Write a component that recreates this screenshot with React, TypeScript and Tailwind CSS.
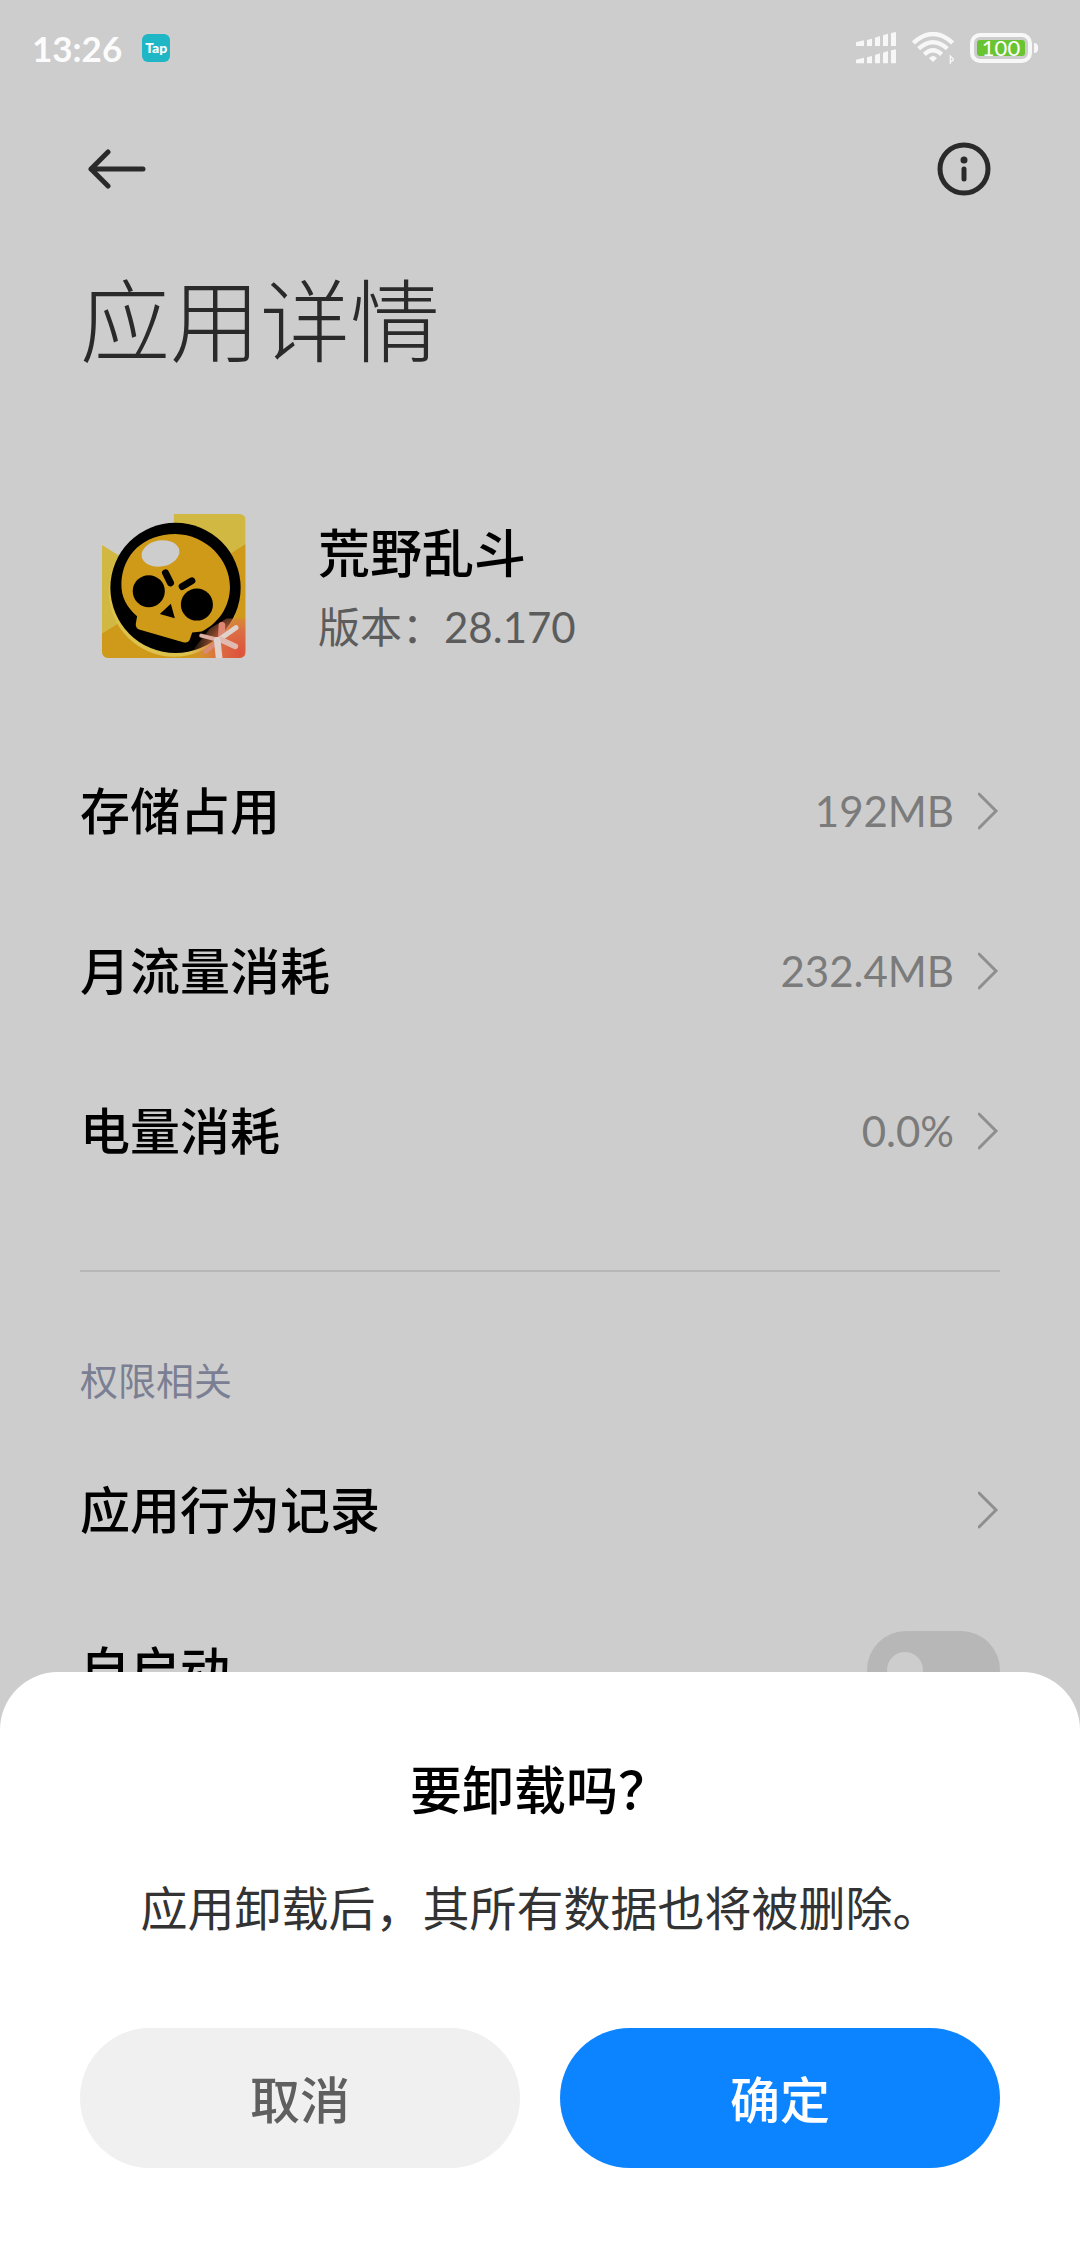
import type { ReactNode } from "react";

const usage = [
  { label: "存储占用", value: "192MB" },
  { label: "月流量消耗", value: "232.4MB" },
  { label: "电量消耗", value: "0.0%" },
];

function StatusBar() {
  return (
    <div className="flex h-24 items-center justify-between pl-8 pr-[42px]">
      <div className="flex items-center gap-5">
        <span className="text-[35px] leading-10 font-bold text-[#fcfcfc]">13:26</span>
        <span className="flex size-7 items-center justify-center rounded-md bg-[#1fb6c6] text-[14px] leading-4 font-black text-white">
          Tap
        </span>
      </div>
      <div className="flex items-center gap-4">
        <SignalIcon />
        <WifiIcon />
        <Battery />
      </div>
    </div>
  );
}

function SignalIcon() {
  return (
    <svg className="h-8 w-10" viewBox="0 0 120 96" fill="#f7f7f7" aria-hidden="true">
      <path d="M0 31L24 25V42H0zM33 24L48 20V42H33zM57 17L72 12V42H57zM81 10L96 5V42H81zM105 3L120 0V42H105z" />
      <path d="M0 83L24 77V94H0zM33 76L48 72V94H33zM57 69L72 64V94H57zM81 62L96 57V94H81zM105 55L120 52V94H105z" />
    </svg>
  );
}

function WifiIcon() {
  return (
    <svg className="h-8 w-[42px]" viewBox="0 0 126 96" fill="none" stroke="#f7f7f7" strokeWidth="13" aria-hidden="true">
      <path d="M4 33Q63 -21 122 33" />
      <path d="M20 50Q63 11 106 50" />
      <path d="M37 67Q63 43 89 67" />
      <path d="M63 90L51 79Q63 65 75 79z" fill="#f7f7f7" stroke="none" />
      <path d="M115 70V97L115 72L126 83L115 90" strokeWidth="4" />
    </svg>
  );
}

function Battery() {
  return (
    <div className="flex items-center gap-[2px]">
      <span className="flex h-[30px] w-[62px] rounded-[10px] border-4 border-[#f7f7f7] p-[3px]">
        <span className="flex flex-1 items-center justify-center rounded-[3px] bg-[#68c531] text-[22px] leading-4 text-white">
          100
        </span>
      </span>
      <span className="h-[10px] w-1 rounded-r-sm bg-[#f7f7f7]" />
    </div>
  );
}

function AppIcon() {
  return (
    <svg className="size-36" viewBox="67 72 431 431" role="img" aria-label="荒野乱斗">
      <defs>
        <clipPath id="tile">
          <path d="M282 72H477Q497 72 497 92V483Q497 503 477 503H87Q67 503 67 483V165L115 195L282 120z" />
        </clipPath>
        <radialGradient id="glow" gradientUnits="userSpaceOnUse" cx="480" cy="490" r="150">
          <stop offset="0" stopColor="#dd523c" />
          <stop offset="0.45" stopColor="#dd6848" stopOpacity="0.9" />
          <stop offset="1" stopColor="#dd8a50" stopOpacity="0" />
        </radialGradient>
      </defs>
      <g clipPath="url(#tile)">
        <path d="M67 72H497V503H67z" fill="#d0b843" />
        <path d="M497 162L287 295L497 430z" fill="#cf9a1a" />
        <path d="M67 430L287 295V503H67z" fill="#cf9a1a" />
        <path d="M287 295L497 430V503H287z" fill="#cf9a1a" />
        <circle cx="283" cy="303" r="196" fill="#dcc24c" />
      </g>
      <circle cx="287" cy="293" r="195" fill="#000" />
      <path
        d="M287 132C380 134 450 210 450 290C450 350 415 400 365 424L337 427L330 447Q325 460 310 456L178 418Q168 414 168 402L172 378C140 350 124 320 125 280C128 195 190 132 287 132z"
        fill="#cf9a18"
      />
      <ellipse cx="242" cy="190" rx="57" ry="39" transform="rotate(-10 242 190)" fill="#cdcdcd" />
      <circle cx="207" cy="303" r="48" />
      <circle cx="351" cy="343" r="48" />
      <path d="M257 248L272 278M307 289L336 272" stroke="#000" strokeWidth="21" strokeLinecap="round" />
      <path d="M273 341L240 371L285 384z" />
      <g clipPath="url(#tile)">
        <path d="M320 503L390 415L440 385H497V503z" fill="url(#glow)" />
        <g strokeLinecap="round">
          <path d="M376 484L412 456" stroke="#d98a78" strokeWidth="12" />
          <path d="M426 405L424 445" stroke="#de8773" strokeWidth="20" />
          <path d="M364 436L420 450" stroke="#dfaea2" strokeWidth="12" />
          <path d="M468 412L420 446" stroke="#dfd2cd" strokeWidth="15" />
          <path d="M466 468L422 448" stroke="#e0bab0" strokeWidth="17" />
          <path d="M412 450L418 508" stroke="#dfd2cd" strokeWidth="20" />
        </g>
      </g>
    </svg>
  );
}

function Chevron() {
  return (
    <svg className="h-10 w-[22px]" viewBox="0 0 22 40" fill="none" stroke="#8f8f8f" strokeWidth="3" strokeLinecap="round" aria-hidden="true">
      <path d="M1 3L18 20L1 37" />
    </svg>
  );
}

function LinkRow({ label, value }: { label: string; value?: string }) {
  return (
    <a href="#" className="flex h-40 items-center justify-between">
      <span className="text-[50px] leading-[60px] font-medium text-black">{label}</span>
      <span className="flex items-center gap-6 text-[42px] leading-[60px] text-[#7b7b7b]">
        {value}
        <Chevron />
      </span>
    </a>
  );
}

function SheetButton({ className, children }: { className: string; children: ReactNode }) {
  return (
    <button type="button" className={`h-[140px] flex-1 rounded-full pt-1 text-[50px] leading-[60px] font-medium ${className}`}>
      {children}
    </button>
  );
}

export default function App() {
  return (
    <div className="min-h-screen bg-[#cdcdcd] font-['Lato','Noto_Sans_CJK_SC',sans-serif]" lang="zh-CN">
      <StatusBar />

      <header className="px-20">
        <div className="flex h-[146px] items-center justify-between px-2">
          <button type="button" aria-label="返回">
            <svg className="h-10 w-[58px]" viewBox="0 0 58 40" fill="none" stroke="#2a2a2a" strokeWidth="5" strokeLinecap="round" strokeLinejoin="round">
              <path d="M20 3L3 20L20 37M3 20H55" />
            </svg>
          </button>
          <button type="button" aria-label="应用信息">
            <svg className="size-14" viewBox="0 0 56 56" fill="none" stroke="#2a2a2a" strokeWidth="5" strokeLinecap="round">
              <circle cx="28" cy="28" r="24" />
              <circle cx="28" cy="19" r="3.5" fill="#2a2a2a" stroke="none" />
              <path d="M28 28V38" />
            </svg>
          </button>
        </div>
        <h1 className="pt-6 text-[90px] leading-[108px] font-light text-[#2a2a2a]">应用详情</h1>
      </header>

      <main className="px-20">
        <section className="mt-[140px] mb-[73px] flex h-36 items-center gap-[72px] px-[22px]">
          <AppIcon />
          <div className="pt-2">
            <h2 className="text-[52px] leading-[74px] font-medium text-black">荒野乱斗</h2>
            <p className="text-[42px] leading-[74px] text-[#5c5c5c]">{"版本\uFF1A28.170"}</p>
          </div>
        </section>

        {usage.map((item) => (
          <LinkRow key={item.label} label={item.label} value={item.value} />
        ))}

        <hr className="mt-[59px] border-t-2 border-[#b7b7b7]" />

        <h3 className="pt-[78px] pb-5 text-[38px] leading-[60px] text-[#7b7f93]">权限相关</h3>
        <LinkRow label="应用行为记录" />
        <label className="flex h-40 items-center justify-between text-[50px] leading-[60px] font-medium text-black">
          自启动
          <input
            type="checkbox"
            role="switch"
            className="flex h-[78px] w-[133px] appearance-none items-center rounded-full bg-[#b7b7b7] px-5 before:size-9 before:rounded-full before:bg-[#cdcdcd]"
          />
        </label>
      </main>

      <div
        role="dialog"
        aria-modal="true"
        aria-labelledby="uninstall-title"
        className="fixed inset-x-0 bottom-0 rounded-t-[58px] bg-white px-20 pt-[88px] pb-20 text-center"
      >
        <h2 id="uninstall-title" className="text-[52px] leading-[60px] font-medium text-black">
          {"要卸载吗\uFF1F"}
        </h2>
        <p className="pt-[58px] text-[47px] leading-[60px] whitespace-nowrap text-[#333]">
          {"应用卸载后\uFF0C其所有数据也将被删除。"}
        </p>
        <div className="flex gap-10 pt-[90px]">
          <SheetButton className="bg-[#f0f0f0] text-[#5f5f5f]">取消</SheetButton>
          <SheetButton className="bg-[#0d84ff] text-white">确定</SheetButton>
        </div>
      </div>
    </div>
  );
}
